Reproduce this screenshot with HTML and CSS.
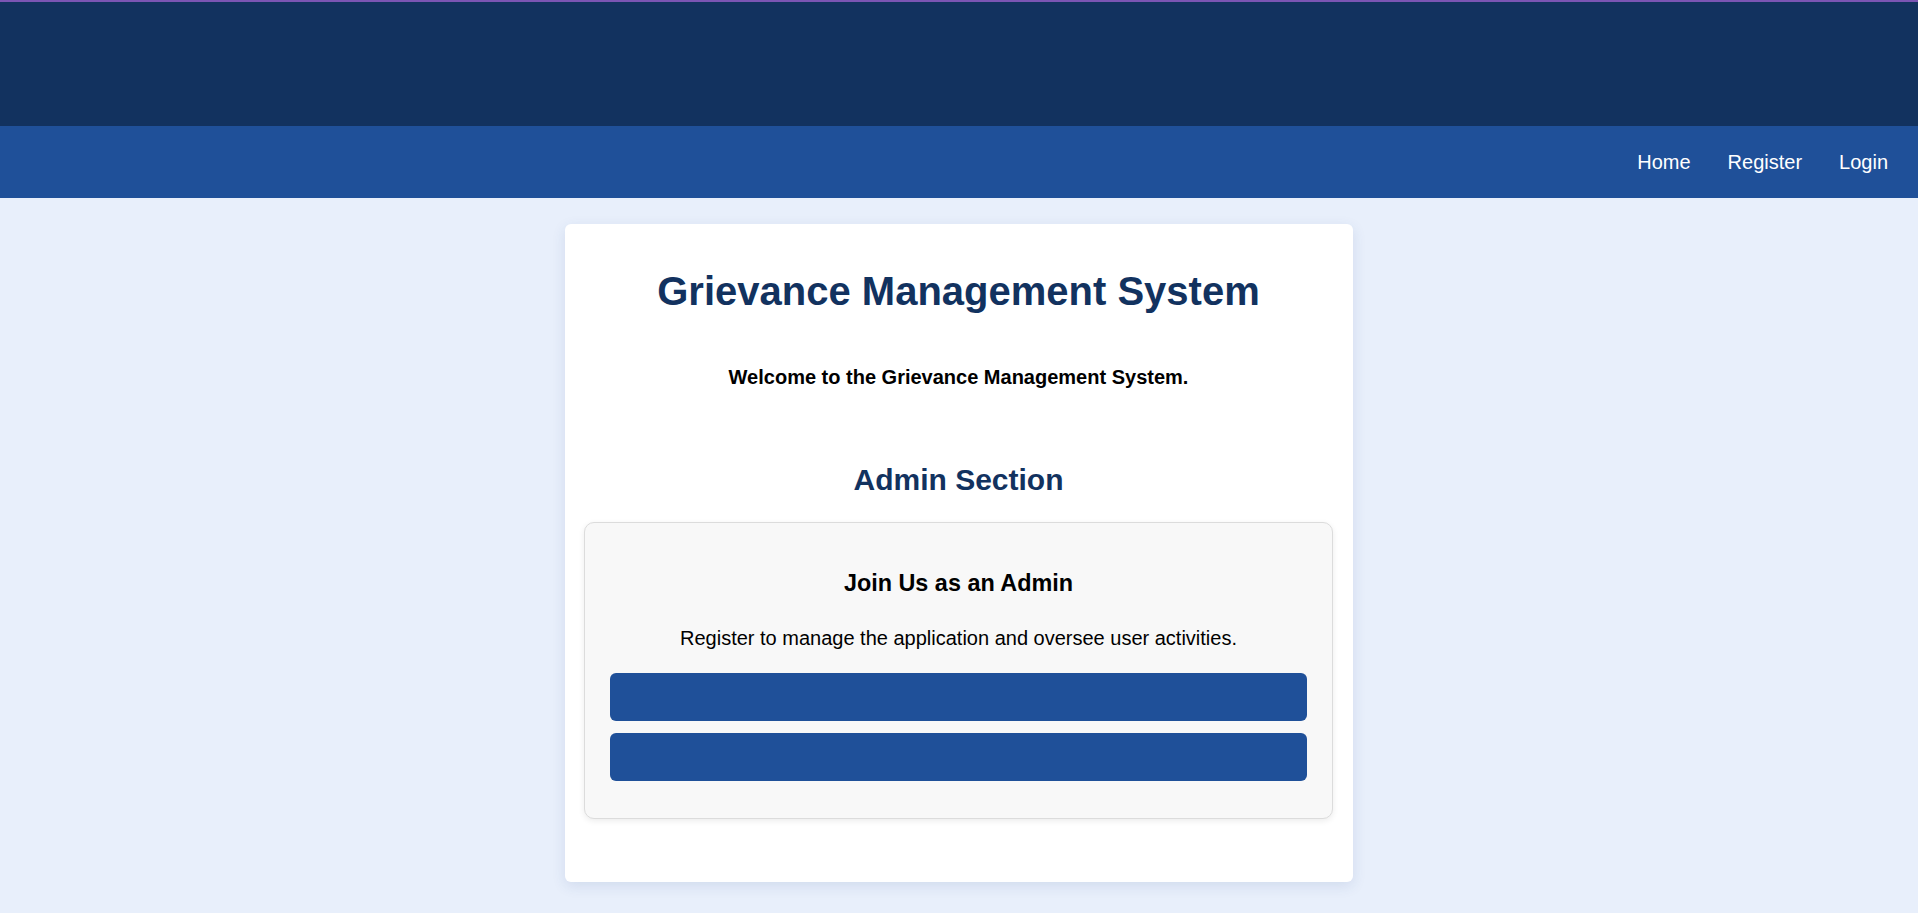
FILE: index.html
```html
<!DOCTYPE html>
<html lang="en">
<head>
<meta charset="utf-8">
<title>Grievance Management System</title>
<link rel="stylesheet" href="styles.css">
</head>
<body>
<header class="topbar"></header>
<nav class="navbar">
  <a class="nav-link" href="#">Home</a>
  <a class="nav-link" href="#">Register</a>
  <a class="nav-link" href="#">Login</a>
</nav>
<main class="page">
  <section class="card">
    <h1 class="title">Grievance Management System</h1>
    <p class="welcome">Welcome to the Grievance Management System.</p>
    <h2 class="section-title">Admin Section</h2>
    <div class="panel">
      <h3 class="panel-title">Join Us as an Admin</h3>
      <p class="panel-text">Register to manage the application and oversee user activities.</p>
      <button class="btn" type="button"></button>
      <button class="btn" type="button"></button>
    </div>
  </section>
</main>
</body>
</html>
```
FILE: styles.css
```css
html, body {
  margin: 0;
  padding: 0;
}
body {
  background: #e8effb;
  font-family: "Liberation Sans", Arial, sans-serif;
  font-size: 20px;
  color: #000;
  height: 913px;
  overflow: hidden;
}
.topbar {
  height: 124px;
  background: #12325f;
  border-top: 2px solid #7b55b3;
}
.navbar {
  height: 72px;
  background: #1f5099;
  display: flex;
  align-items: center;
  justify-content: flex-end;
  gap: 37px;
  padding-right: 30px;
}
.nav-link {
  color: #fff;
  text-decoration: none;
  font-size: 20px;
  line-height: 23px;
}
.page {
  display: flex;
  justify-content: center;
  padding-top: 26px;
}
.card {
  width: 788px;
  box-sizing: border-box;
  background: #fff;
  border-radius: 6px;
  padding: 20px 20px 20px 19px;
  box-shadow: 0 4px 14px rgba(40, 70, 140, 0.12);
  text-align: center;
}
.title {
  margin: 24px 0 0;
  font-size: 40px;
  line-height: 46px;
  font-weight: bold;
  color: #12325f;
}
.welcome {
  margin: 52px 0 0;
  font-size: 20px;
  line-height: 23px;
  font-weight: bold;
}
.section-title {
  margin: 73px 0 0;
  font-size: 30px;
  line-height: 35px;
  font-weight: bold;
  color: #12325f;
}
.panel {
  margin: 25px 0 43px;
  padding: 25px;
  background: #f8f8f8;
  border: 1px solid #dcdcdc;
  border-radius: 10px;
  box-shadow: 0 2px 6px rgba(0, 0, 0, 0.08);
  display: flex;
  flex-direction: column;
}
.panel-title {
  margin: 22px 0 0;
  font-size: 23.4px;
  line-height: 27px;
  font-weight: bold;
}
.panel-text {
  margin: 30px 0 23px;
  font-size: 20px;
  line-height: 23px;
}
.btn {
  display: block;
  height: 48px;
  border: none;
  border-radius: 6px;
  background: #1f5099;
  margin: 0 0 12px;
  padding: 0;
  width: 100%;
  font: inherit;
  cursor: pointer;
}
```
